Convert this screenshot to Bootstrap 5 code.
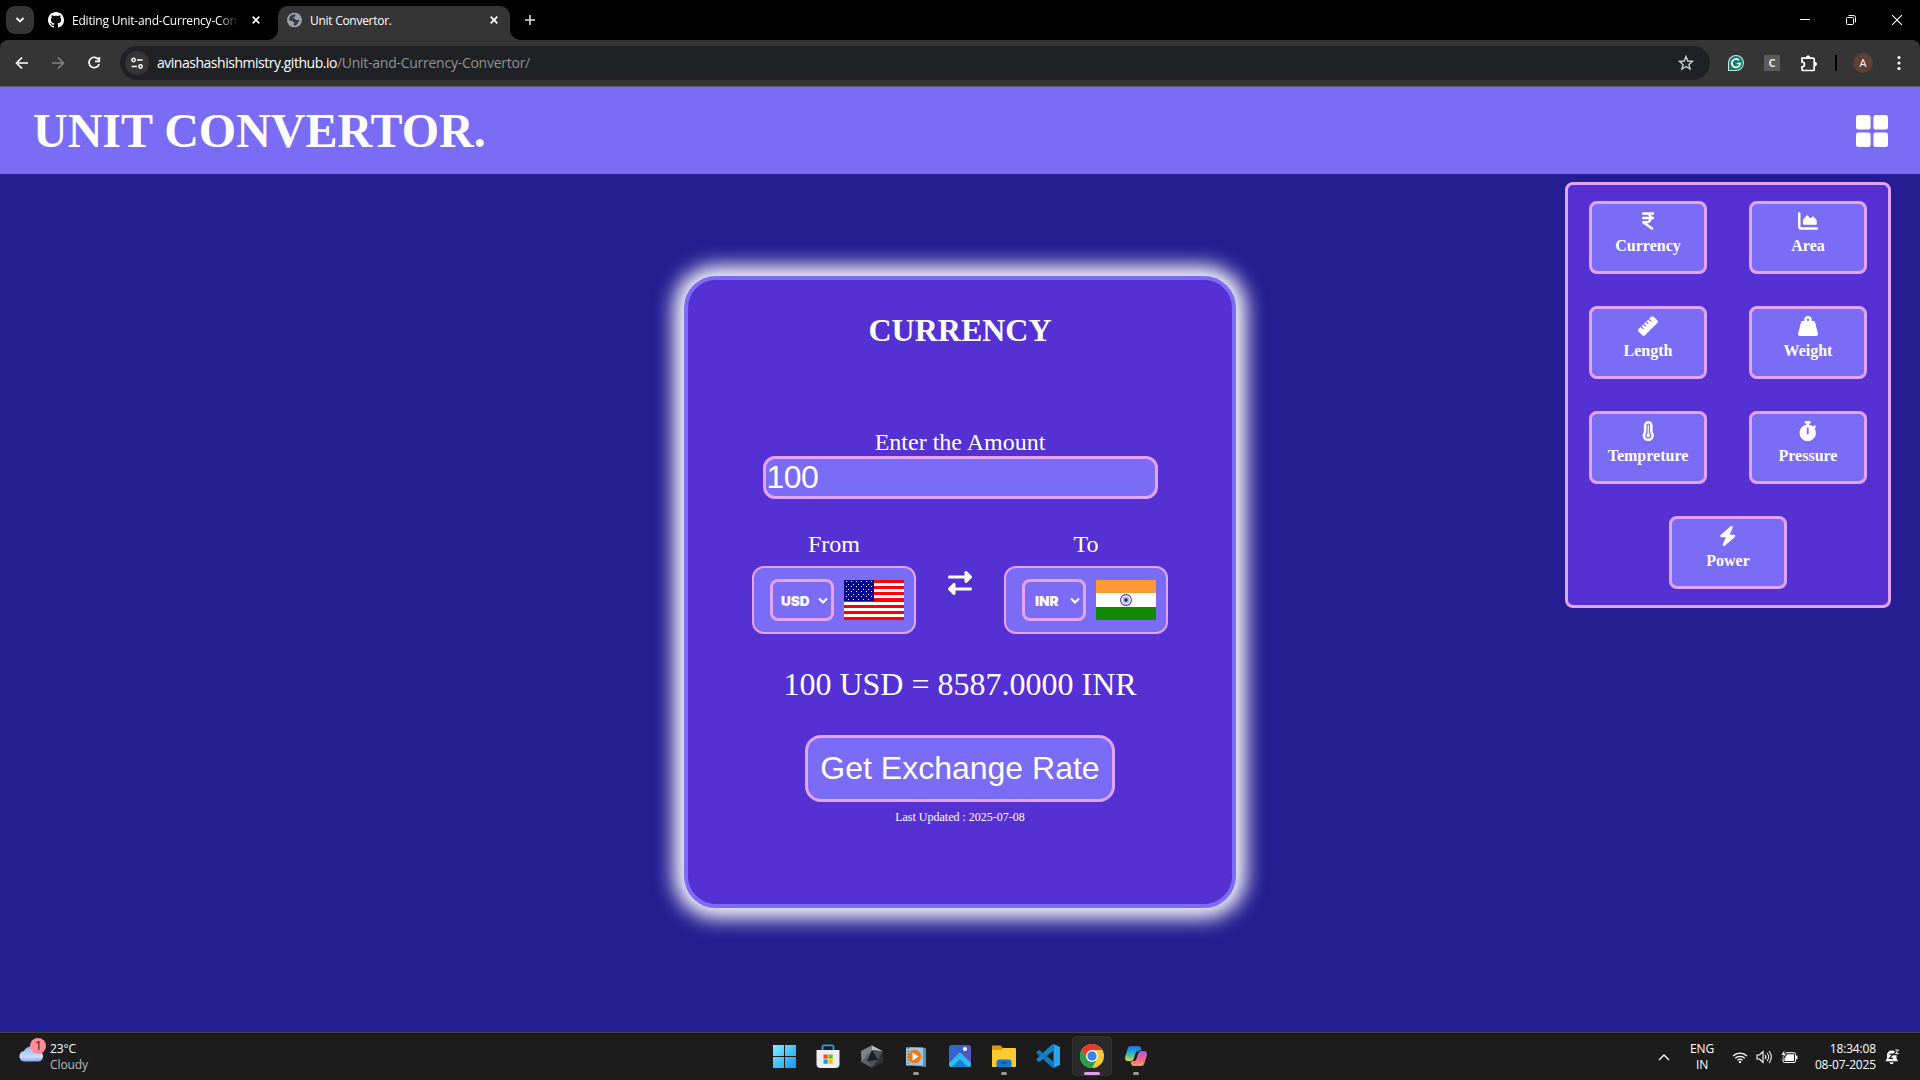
<!DOCTYPE html>
<html lang="en">
<head>
<meta charset="utf-8">
<title>Unit Convertor.</title>
<link href="https://cdn.jsdelivr.net/npm/bootstrap@5.3.0/dist/css/bootstrap.min.css" rel="stylesheet">
<style>
:root{--lilac:#7b6cf6;--violet:#5531d3;--navy:#241e92;--pink:#e5a4fb;}
html,body{height:1080px;overflow:hidden;}
body{width:1920px;background:var(--navy);font-family:"Liberation Serif",serif;color:#fff;}
svg{display:block;flex:none;}
.ui{font-family:"Open Sans","Noto Sans",sans-serif;}
/* browser frame */
.strip{height:40px;background:#000;font-size:12px;line-height:40px;white-space:nowrap;}
.tabsearch{width:28px;height:28px;border-radius:9px;background:#353535;margin:6px 0 0 6px;}
.tab-idle{width:244px;padding:0 0 8px 14px;}
.tab-idle .tabname{width:168px;overflow:hidden;letter-spacing:-.2px;padding-top:1px;-webkit-mask-image:linear-gradient(90deg,#000 146px,transparent 166px);mask-image:linear-gradient(90deg,#000 146px,transparent 166px);}
.tab-idle .x-mark{margin-left:12px;}
.tab-live{width:232px;height:34px;margin-top:6px;background:#353535;border-radius:10px 10px 0 0;padding:0 11px 0 9px;line-height:30px;}
.tab-live .tabname{letter-spacing:-.28px;}
.tab-live .fav{margin-top:6px;}
.tab-live .x-mark{margin-top:10px;}
.tab-live::before,.tab-live::after{content:"";position:absolute;bottom:0;width:10px;height:10px;}
.tab-live::before{left:-10px;background:radial-gradient(circle at 0 0,transparent 9.5px,#353535 10px);}
.tab-live::after{right:-10px;background:radial-gradient(circle at 100% 0,transparent 9.5px,#353535 10px);}
.newtab{margin:15px 0 0 15px;}
.wincontrols{gap:36px;padding-right:18px;height:39px;}
.toolrow-wrap{background:#000;}
.toolrow{height:47px;background:#353535;border-radius:8px 8px 0 0;border-bottom:1px solid #5f5f5f;padding:6px 0 6px 14px;}
.gap-l20{margin-left:20px;}
.omni{width:1590px;height:34px;border-radius:17px;background:#202124;margin-left:18px;margin-right:18px;padding:0 16px 0 5px;font-size:14px;}
.sitebtn{width:24px;height:24px;border-radius:50%;background:#353535;}
.addr{margin-left:8px;line-height:32px;letter-spacing:-.48px;}
.addr .rest{color:#8e9195;letter-spacing:-.26px;}
.ext-c{width:16px;height:16px;background:#5b5b5b;font:bold 11px/16px "Open Sans",sans-serif;color:#e8e8e8;}
.vbar{width:2px;height:16px;margin-left:17px;}
.avatar{width:20px;height:20px;border-radius:50%;background:#5d4037;font-size:11px;line-height:20px;margin:0 24px 0 16px;}
/* page */
.topbar{height:87px;background:var(--lilac);padding:0 32px 0 33px;}
.topbar h1{font-size:48px;line-height:56px;font-weight:700;margin:1px 0 0;}
.stage{height:858px;padding-top:102px;}
.conv{width:552px;height:632px;background:var(--violet);border:4px solid var(--lilac);border-radius:32px;box-shadow:0 0 20px 10px #fff;padding-top:32px;}
.conv h2{font-size:32px;line-height:36px;font-weight:700;margin:0 0 80px;}
.cap24{font-size:24px;line-height:28px;}
.amount{width:395px;height:43px;border:3px solid var(--pink);border-radius:12px;background:var(--lilac);color:#fff;font:32px/36px "Liberation Sans",sans-serif;padding:0 1px 1px;outline:0;letter-spacing:-.5px;}
.pair{margin-top:31px;width:416px;}
.swap{margin-top:41px;}
.pick{width:164px;height:68px;border:2px solid var(--pink);border-radius:12px;background:var(--lilac);margin-top:8px;padding:0 10px 0 16px;}
.sel{width:64px;height:42px;border:3px solid var(--pink);border-radius:8px;font:900 13.6px/36px Inter,sans-serif;padding:2px 3px 0 8px;}
.sel .inr{padding-left:2px;}
.outcome{font-size:32px;line-height:36px;margin-top:32px;}
.go{width:310px;height:67px;margin-top:33px;border:3px solid var(--pink);border-radius:16px;background:var(--lilac);color:#fff;font:32px/58px "Liberation Sans",sans-serif;padding:0 0 2px;}
.stamp{font-size:12px;line-height:14px;margin-top:8px;}
.menu{width:326px;height:426px;right:29px;top:8px;border:3px solid var(--pink);border-radius:8px;background:var(--violet);padding-top:16px;gap:32px 42px;}
.tile{width:118px;height:73px;border:3px solid var(--pink);border-radius:8px;background:var(--lilac);font-weight:700;font-size:16px;line-height:18px;padding-top:7px;}
.tile svg{height:20px;margin-bottom:6px;}
/* taskbar */
.taskbar{height:48px;background:#1c1c1c;border-top:1px solid #444;font-size:12px;line-height:16px;}
.weather{width:764px;padding:5px 0 0 18px;letter-spacing:-.1px;}
.wtext{margin:3px 0 0 4px;}
.sky{color:#bbb;}
.app{width:40px;height:40px;margin:3px 4px 0 0;padding-top:8px;border-radius:5px;}
.app.on{background:#292929;box-shadow:inset 0 0 0 1px #333;}
.dot{width:6px;height:3px;border-radius:2px;background:#9a9a9a;margin-top:4px;}
.on .dot{width:16px;background:#dba0e5;}
.tray{padding-right:20px;height:48px;}
.lang{width:24px;margin:0 18px 0 20px;letter-spacing:-.1px;}
.quick{gap:8px;}
.clock{width:72px;margin:0 9px 0 6px;letter-spacing:-.15px;white-space:nowrap;}
</style>
<script src="https://cdn.jsdelivr.net/npm/bootstrap@5.3.0/dist/js/bootstrap.bundle.min.js"></script>
</head>
<body class="d-flex flex-column">

<div class="strip ui d-flex">
  <div class="tabsearch d-flex align-items-center justify-content-center"><svg width="10" height="8" fill="none" stroke="#fff" stroke-width="1.8"><path d="M1.5 2 5 5.5 8.500 2"/></svg></div>
  <div class="tab-idle d-flex align-items-center">
    <svg class="mt-2" width="16" height="16" viewBox="0 0 16 16" fill="#fff"><path d="M8 0C3.580 0 0 3.580 0 8c0 3.540 2.290 6.530 5.470 7.590.4.070.55-.17.55-.38 0-.19-.010-.82-.010-1.490-2.010.37-2.530-.49-2.690-.94-.09-.23-.48-.94-.82-1.130-.28-.15-.68-.52-.010-.53.63-.010 1.080.58 1.230.82.72 1.210 1.870.87 2.330.66.070-.52.28-.87.51-1.070-1.780-.2-3.640-.89-3.640-3.950 0-.87.31-1.590.82-2.150-.08-.2-.36-1.020.08-2.120 0 0 .67-.21 2.200.82.64-.18 1.320-.27 2-.27s1.360.09 2 .27c1.530-1.040 2.200-.82 2.200-.82.44 1.100.16 1.920.08 2.120.51.56.82 1.270.82 2.150 0 3.070-1.870 3.750-3.650 3.950.29.25.54.73.54 1.480 0 1.070-.010 1.930-.010 2.200 0 .21.15.46.55.38A8.010 8.010 0 0 0 16 8c0-4.420-3.580-8-8-8z"/></svg>
    <div class="tabname ms-2 mt-2">Editing Unit-and-Currency-Conv</div>
    <svg class="x-mark mt-2" width="8" height="8" stroke="#fff" stroke-width="1.700"><path d="M.7.7 7.300 7.300M7.300.7.7 7.300"/></svg>
  </div>
  <div class="tab-live position-relative d-flex align-items-start">
    <svg class="fav" width="15" height="16" viewBox="0 0 16 16"><circle cx="8" cy="8" r="7.800" fill="#9aa0a8"/><path d="M7 1.500 10 2c-.5 1-2 1-2 2.500L5.500 6H8l1.500 2H13l-1 3-3 3.500L7 13l1-2-1.500-1.500L2 8l1-4z" fill="#353a44"/><circle cx="8" cy="8" r="7" fill="none" stroke="#9aa0a8" stroke-width="1.500"/></svg>
    <div class="tabname ms-2">Unit Convertor.</div>
    <svg class="x-mark ms-auto" width="10" height="8" stroke="#fff" stroke-width="1.700"><path d="M1.700.7 8.300 7.300M8.300.7 1.700 7.300"/></svg>
  </div>
  <svg class="newtab" width="10" height="10" stroke="#ddd" stroke-width="1.600"><path d="M5 0V10M0 5H10"/></svg>
  <div class="wincontrols ms-auto d-flex align-items-center">
    <svg width="10" height="10"><path d="M0 4.500H10" stroke="#fff"/></svg>
    <svg width="10" height="10" fill="none" stroke="#fff"><rect x=".5" y="2.500" width="7" height="7" rx="1"/><path d="M2.500.5H7.500a2 2 0 0 1 2 2V7.500"/></svg>
    <svg width="10" height="10" stroke="#fff" stroke-width="1.100"><path d="M0 0 10 10M10 0 0 10"/></svg>
  </div>
</div>
<div class="toolrow-wrap ui">
  <div class="toolrow d-flex align-items-center">
    <svg width="16" height="16" fill="none" stroke="#fff" stroke-width="1.700"><path d="M14 8H3M8 2.500 2.500 8 8 13.500"/></svg>
    <svg class="gap-l20" width="16" height="16" fill="none" stroke="#828282" stroke-width="1.700"><path d="M2 8H13M8 2.500 13.500 8 8 13.500"/></svg>
    <svg class="gap-l20" width="16" height="16" fill="none" stroke="#fff" stroke-width="1.700"><path d="M12.500 4.500A5.200 5.200 0 1 0 13.200 9M13.300 2V6.300H9"/></svg>
    <div class="omni d-flex align-items-center">
      <div class="sitebtn d-flex align-items-center justify-content-center"><svg width="14" height="12" fill="none" stroke="#fff" stroke-width="1.400"><circle cx="3.500" cy="3" r="1.700"/><path d="M7 3H12.500M1.500 9.500H7"/><circle cx="10.500" cy="9.500" r="1.700"/></svg></div>
      <div class="addr">avinashashishmistry.github.io<span class="rest">/Unit-and-Currency-Convertor/</span></div>
      <svg class="ms-auto" width="16" height="16" fill="none" stroke="#d0d0d0" stroke-width="1.400"><path d="M8 1.600 9.800 6 14.600 6.300 10.900 9.400 12.100 14 8 11.500 3.900 14 5.100 9.400 1.400 6.300 6.200 6z"/></svg>
    </div>
    <svg width="16" height="16"><path d="M0 16V8A8 8 0 1 1 8 16z" fill="#cfe9e2"/><path d="M1 15V8A7 7 0 1 1 8 15z" fill="#0b7f6b"/><path d="M11 5.200A4.200 4.200 0 1 0 12.200 8.500H8.800" fill="none" stroke="#fff" stroke-width="1.700"/></svg>
    <div class="ext-c text-center gap-l20">C</div>
    <svg class="gap-l20" width="18" height="17" fill="none" stroke="#fff" stroke-width="1.700"><path d="M2 3.200H13.200a1 1 0 0 1 1 1V14.500a1 1 0 0 1-1 1H3a1 1 0 0 1-1-1V11.800a2.200 2.200 0 0 0 0-4.800z"/><path d="M6.400 2.400a1.700 1.700 0 0 1 3.400 0zM15 7.300a1.700 1.700 0 0 1 0 3.400z" fill="#fff" stroke-width=".8"/></svg>
    <div class="vbar bg-black"></div>
    <div class="avatar text-center">A</div>
    <svg width="4" height="16" fill="#fff"><circle cx="2" cy="2.500" r="1.600"/><circle cx="2" cy="8" r="1.600"/><circle cx="2" cy="13.500" r="1.600"/></svg>
  </div>
</div>

<header class="topbar d-flex align-items-center justify-content-between">
  <h1>UNIT CONVERTOR.</h1>
  <svg width="32" height="32" fill="#fff"><rect width="14.600" height="14.600" rx="2.500"/><rect x="17.400" width="14.600" height="14.600" rx="2.500"/><rect y="17.400" width="14.600" height="14.600" rx="2.500"/><rect x="17.400" y="17.400" width="14.600" height="14.600" rx="2.500"/></svg>
</header>

<main class="stage position-relative">
  <section class="conv mx-auto d-flex flex-column align-items-center">
    <h2>CURRENCY</h2>
    <label class="cap24" for="amt">Enter the Amount</label>
    <input id="amt" class="amount" type="text" value="100">
    <div class="pair d-flex justify-content-between">
      <div class="text-center cap24">From
        <div class="pick d-flex align-items-center justify-content-between">
          <div class="sel d-flex align-items-center justify-content-between"><span>USD</span><svg width="10" height="8" fill="none" stroke="#fff" stroke-width="2"><path d="M1 1.500 5 5.500 9 1.500"/></svg></div>
          <svg width="60" height="40" shape-rendering="crispEdges"><defs><pattern id="st" width="5" height="5" patternUnits="userSpaceOnUse"><path d="M2 1h1v1H2zM4 3.500h1v1H4z" fill="#fff"/></pattern></defs><rect width="60" height="40" fill="#f00"/><path d="M0 4.600H60M0 10.700H60M0 16.900H60M0 23.100H60M0 29.200H60M0 35.400H60" stroke="#fff" stroke-width="3.080"/><rect width="30" height="21" fill="#00008f"/><rect x="1" y="1" width="28" height="19" fill="url(#st)"/></svg>
        </div>
      </div>
      <svg class="swap" width="24" height="24" viewBox="0 0 512 512" fill="#fff"><path d="M32 96l320 0V32c0-12.900 7.800-24.600 19.800-29.600s25.700-2.200 34.900 6.900l96 96c6 6 9.400 14.100 9.400 22.600s-3.400 16.600-9.400 22.600l-96 96c-9.200 9.200-22.900 11.900-34.900 6.900s-19.800-16.600-19.800-29.600V160L32 160c-17.700 0-32-14.300-32-32s14.300-32 32-32zM480 352c17.700 0 32 14.300 32 32s-14.300 32-32 32H160v64c0 12.900-7.800 24.600-19.800 29.600s-25.700 2.200-34.900-6.900l-96-96c-6-6-9.400-14.100-9.400-22.600s3.400-16.600 9.400-22.600l96-96c9.200-9.200 22.900-11.900 34.900-6.900s19.800 16.600 19.800 29.600l0 64H480z"/></svg>
      <div class="text-center cap24">To
        <div class="pick d-flex align-items-center justify-content-between">
          <div class="sel d-flex align-items-center justify-content-between"><span class="inr">INR</span><svg width="10" height="8" fill="none" stroke="#fff" stroke-width="2"><path d="M1 1.500 5 5.500 9 1.500"/></svg></div>
          <svg width="60" height="40"><rect width="60" height="40" fill="#fff"/><rect width="60" height="13" fill="#ff9933"/><rect y="27" width="60" height="13" fill="#128807"/><circle cx="30" cy="20" r="5.400" fill="#fff" stroke="#3a3a9c" stroke-width="1.100"/><circle cx="30" cy="20" r="3.400" fill="#b9b9e0"/><circle cx="30" cy="20" r="1.700" fill="#1c1c8a"/></svg>
        </div>
      </div>
    </div>
    <div class="outcome">100 USD = 8587.0000 INR</div>
    <button class="go">Get Exchange Rate</button>
    <div class="stamp">Last Updated : 2025-07-08</div>
  </section>

  <nav class="menu position-absolute d-flex flex-wrap justify-content-center align-content-start">
    <div class="tile d-flex flex-column align-items-center"><svg viewBox="0 0 320 512" fill="#fff"><path d="M0 64C0 46.300 14.300 32 32 32l64 0 16 0 176 0c17.700 0 32 14.300 32 32s-14.300 32-32 32l-56.200 0c9.600 14.400 16.700 30.600 20.700 48l35.600 0c17.700 0 32 14.300 32 32s-14.300 32-32 32l-35.600 0c-13.200 58.300-61.900 103.200-122.200 110.900L274.600 422c14.400 10.300 17.700 30.300 7.400 44.600s-30.300 17.700-44.600 7.400L13.400 314C2.100 306-2.700 291.500 1.500 278.200S18.100 256 32 256l80 0c32.800 0 61-19.700 73.300-48L32 208c-17.700 0-32-14.300-32-32s14.300-32 32-32l153.300 0C173 115.700 144.800 96 112 96L96 96 32 96C14.300 96 0 81.700 0 64z"/></svg>Currency</div>
    <div class="tile d-flex flex-column align-items-center"><svg viewBox="0 0 512 512" fill="#fff"><path d="M64 64c0-17.700-14.300-32-32-32S0 46.300 0 64V400c0 44.200 35.800 80 80 80H480c17.700 0 32-14.300 32-32s-14.300-32-32-32H80c-8.800 0-16-7.200-16-16V64zm96 288H448c17.700 0 32-14.300 32-32V251.800c0-7.600-2.700-15-7.700-20.800l-65.800-76.800c-12.100-14.200-33.700-15-46.900-1.800l-21 21c-10 10-26.400 9.200-35.400-1.600l-39.200-47c-12.600-15.100-35.700-15.400-48.700-.6L135.900 215c-5.100 5.800-7.900 13.300-7.900 21.100v84c0 17.700 14.300 32 32 32z"/></svg>Area</div>
    <div class="tile d-flex flex-column align-items-center"><svg viewBox="0 0 512 512" fill="#fff"><path d="M177.900 494.100c-18.700 18.700-49.100 18.700-67.900 0L17.900 401.900c-18.700-18.700-18.700-49.100 0-67.900l50.700-50.700 48 48c6.200 6.200 16.400 6.200 22.600 0s6.200-16.400 0-22.600l-48-48 41.400-41.400 48 48c6.200 6.200 16.400 6.200 22.600 0s6.200-16.400 0-22.600l-48-48 41.400-41.400 48 48c6.200 6.200 16.400 6.200 22.600 0s6.200-16.400 0-22.600l-48-48 41.400-41.400 48 48c6.200 6.200 16.400 6.200 22.600 0s6.200-16.400 0-22.600l-48-48 50.700-50.700c18.700-18.700 49.100-18.700 67.900 0l92.100 92.100c18.700 18.700 18.700 49.100 0 67.900L177.900 494.100z"/></svg>Length</div>
    <div class="tile d-flex flex-column align-items-center"><svg viewBox="0 0 512 512" fill="#fff"><path d="M224 96a32 32 0 1 1 64 0 32 32 0 1 1 -64 0zm122.500 32c3.500-10 5.500-20.800 5.500-32c0-53-43-96-96-96s-96 43-96 96c0 11.200 1.900 22 5.500 32H120c-22 0-41.200 15-46.600 36.400l-72 288c-3.600 14.300-.4 29.500 8.700 41.200S33.200 512 48 512H464c14.800 0 28.700-6.800 37.800-18.500s12.300-26.800 8.700-41.200l-72-288C433.200 143 414 128 392 128H346.500z"/></svg>Weight</div>
    <div class="tile d-flex flex-column align-items-center"><svg viewBox="0 0 320 512" fill="#fff"><path d="M160 64c-26.500 0-48 21.500-48 48V276.500c0 17.300-7.100 31.900-15.300 42.500C86.200 332.600 80 349.500 80 368c0 44.200 35.800 80 80 80s80-35.800 80-80c0-18.500-6.200-35.400-16.700-48.900c-8.200-10.600-15.300-25.200-15.300-42.500V112c0-26.500-21.500-48-48-48zM48 112C48 50.200 98.100 0 160 0s112 50.100 112 112V276.500c0 .1 .1 .3 .2 .6c.2 .6 .8 1.600 1.700 2.800c18.900 24.400 30.100 55 30.100 88.100c0 79.500-64.500 144-144 144S16 447.500 16 368c0-33.200 11.200-63.800 30.100-88.100c.9-1.200 1.500-2.200 1.700-2.800c.1-.3 .2-.5 .2-.6V112zM208 368c0 26.500-21.500 48-48 48s-48-21.500-48-48c0-20.900 13.400-38.700 32-45.300V112c0-8.800 7.200-16 16-16s16 7.200 16 16V322.700c18.600 6.600 32 24.400 32 45.300z"/></svg>Tempreture</div>
    <div class="tile d-flex flex-column align-items-center"><svg viewBox="0 0 448 512" fill="#fff"><path d="M176 0c-17.700 0-32 14.300-32 32s14.300 32 32 32h16V98.400C92.300 113.800 16 200 16 304c0 114.900 93.100 208 208 208s208-93.100 208-208c0-41.800-12.300-80.700-33.500-113.200l24.100-24.100c12.500-12.500 12.500-32.800 0-45.300s-32.800-12.500-45.300 0L355.700 143c-28.100-23-62.200-38.800-99.700-44.600V64h16c17.700 0 32-14.300 32-32s-14.300-32-32-32H224 176zm72 192V320c0 13.300-10.700 24-24 24s-24-10.700-24-24V192c0-13.300 10.700-24 24-24s24 10.700 24 24z"/></svg>Pressure</div>
    <div class="tile d-flex flex-column align-items-center"><svg viewBox="0 0 448 512" fill="#fff"><path d="M349.400 44.600c5.900-13.700 1.500-29.700-10.600-38.500s-28.600-8-39.900 1.800l-256 224c-10 8.800-13.600 22.900-8.900 35.300S50.700 288 64 288H175.500L98.600 467.400c-5.900 13.700-1.500 29.700 10.600 38.500s28.600 8 39.900-1.800l256-224c10-8.800 13.600-22.900 8.900-35.300s-16.600-20.700-30-20.700H272.500L349.400 44.600z"/></svg>Power</div>
  </nav>
</main>

<footer class="taskbar ui d-flex">
  <div class="weather d-flex align-items-start">
    <svg width="28" height="26"><defs><linearGradient id="cl" x1="0" y1="0" x2="0" y2="1"><stop offset="0" stop-color="#8fb4f4"/><stop offset=".7" stop-color="#c9defb"/><stop offset="1" stop-color="#7fa5ec"/></linearGradient></defs><path d="M6 23.500A5.300 5.300 0 0 1 6 13 8 8 0 0 1 20.500 13a5.300 5.300 0 0 1 0 10.500z" fill="url(#cl)"/><circle cx="20" cy="8" r="8" fill="#ff8e9c"/><text x="17" y="12" font-size="12" fill="#111" font-family="Open Sans">1</text></svg>
    <div class="wtext"><div>23°C</div><div class="sky">Cloudy</div></div>
  </div>
  <div class="d-flex">
    <div class="app d-flex flex-column align-items-center"><svg width="24" height="24"><defs><linearGradient id="wn" x1="0" y1="0" x2="1" y2="1"><stop offset="0" stop-color="#7df0ff"/><stop offset="1" stop-color="#0c9af7"/></linearGradient></defs><path d="M1 1H12V12H1zM13 1H24V12H13zM1 13H12V24H1zM13 13H24V24H13z" fill="url(#wn)"/></svg></div>
    <div class="app d-flex flex-column align-items-center"><svg width="24" height="24"><path d="M6.500 7V2.800a1.500 1.500 0 0 1 1.500-1.500h8a1.500 1.500 0 0 1 1.500 1.500V7" fill="none" stroke="#1fa5e4" stroke-width="1.800"/><path d="M.5 6H23.500V20a4 4 0 0 1-4 4H4.500a4 4 0 0 1-4-4z" fill="#eee"/><path d="M7.500 10.500h4.200v4.200H7.500z" fill="#f25022"/><path d="M12.500 10.500h4.200v4.200h-4.200z" fill="#7fba00"/><path d="M7.500 15.500h4.200v4.200H7.500z" fill="#00a4ef"/><path d="M12.500 15.500h4.200v4.200h-4.200z" fill="#ffb900"/></svg></div>
    <div class="app d-flex flex-column align-items-center"><svg width="24" height="24"><path d="M12 1.500 22.500 7V18L12 23.500 1.500 18V7z" fill="#4c4f55"/><path d="M12 1.500 22.500 7 13 6 1.500 13V7z" fill="#b9bfc7"/><path d="M12 1.500 1.500 7V18L12 6z" fill="#7c828b"/><path d="M12 6 18 16 7 17z" fill="#1c1d20"/><path d="M22.500 7V18L12 23.500 18 16z" fill="#303236"/><path d="M12 6 7 17 12 23.500 1.500 18z" fill="#5f646c"/></svg></div>
    <div class="app d-flex flex-column align-items-center"><svg width="24" height="24"><path d="M6 3 22 4V23L6 21z" fill="#5993b4"/><path d="M2 3.500H19V21.500H2z" fill="#9cc9df"/><path d="M4 3.500V21.500" stroke="#5b8ba5" stroke-width="1.500" stroke-dasharray="1.500"/><circle cx="10.500" cy="12.500" r="6.800" fill="#f07818"/><path d="M8.500 8.500V16.500L14.500 12.500z" fill="#fff"/></svg><div class="dot"></div></div>
    <div class="app d-flex flex-column align-items-center"><svg width="24" height="24"><defs><linearGradient id="ph" x1="0" y1="0" x2="1" y2="1"><stop offset="0" stop-color="#1d6fd6"/><stop offset="1" stop-color="#6c4bb8"/></linearGradient></defs><rect x="1" y="1" width="22" height="22" rx="2.500" fill="url(#ph)"/><path d="M1 19 10.500 9.500a2 2 0 0 1 2.800 0L23 19v1.500a2.500 2.500 0 0 1-2.500 2.500h-17A2.500 2.500 0 0 1 1 20.500z" fill="#2fb9ee"/><path d="M12 15 20 23H4z" fill="#1285d2"/><circle cx="17" cy="5" r="2.100" fill="#fff"/></svg></div>
    <div class="app d-flex flex-column align-items-center"><svg width="24" height="24"><path d="M0 2.500A1 1 0 0 1 1 1.500H8.500L11 4V8H0z" fill="#d99b0c"/><path d="M0 6H9L11 4H23a1 1 0 0 1 1 1V22a1 1 0 0 1-1 1H1a1 1 0 0 1-1-1z" fill="#fcc934"/><path d="M4.500 23V18.500a3 3 0 0 1 3-3h9a3 3 0 0 1 3 3V23z" fill="#1379cf"/><path d="M9 18.800h6" stroke="#0a4f94" stroke-width="1.500"/></svg><div class="dot"></div></div>
    <div class="app d-flex flex-column align-items-center"><svg width="24" height="24"><path d="M17.500 0 24 3V21L17.500 24z" fill="#2ba3ee"/><path d="M17.500 0V6.500L3.200 18 .5 16.200V15L16 .5z" fill="#1783c9"/><path d="M17.500 24V17.500L3.200 6 .5 7.800V9L16 23.500z" fill="#0f79c0"/></svg></div>
    <div class="app on d-flex flex-column align-items-center"><svg width="24" height="24"><circle cx="12" cy="12" r="12" fill="#fcc934"/><path d="M12 6H22.400A12 12 0 0 0 1.600 6L6.800 15z" fill="#e33b2e"/><path d="M1.600 6 6.800 15 12 18 17.200 15 12 24A12 12 0 0 1 1.600 6z" fill="#22a050"/><circle cx="12" cy="12" r="6" fill="#fff"/><circle cx="12" cy="12" r="4.700" fill="#3b82f0"/></svg><div class="dot"></div></div>
    <div class="app d-flex flex-column align-items-center"><svg width="24" height="24"><defs><linearGradient id="ca" x1="0" y1="0" x2="0" y2="1"><stop offset="0" stop-color="#1d6fe0"/><stop offset=".5" stop-color="#29b6c9"/><stop offset="1" stop-color="#e8d52c"/></linearGradient><linearGradient id="cb" x1="0" y1="0" x2="0" y2="1"><stop offset="0" stop-color="#a45ae8"/><stop offset=".5" stop-color="#f0609a"/><stop offset="1" stop-color="#fb9a4b"/></linearGradient></defs><path d="M7 2H14.500C17 2 17 4 17.500 6L14 7C12 7 11.500 9 10.500 12.500 9.500 16 9 17 6 17H4C1 17 .5 14.500 1.500 11.500L3.500 5C4.300 2.800 5 2 7 2z" fill="url(#ca)"/><path d="M17 22H9.500C7.500 22 7 20 6.500 17.500L10 17C12 17 12.500 15 13.500 11.500 14.500 8 15 7 18 7H20C23 7 23.500 9.500 22.500 12.500L20.500 19C19.700 21.200 19 22 17 22z" fill="url(#cb)"/></svg><div class="dot"></div></div>
  </div>
  <div class="tray ms-auto d-flex align-items-center">
    <svg width="12" height="8" fill="none" stroke="#fff" stroke-width="1.400"><path d="M1 7 6 2 11 7"/></svg>
    <div class="lang text-center">ENG<br>IN</div>
    <div class="quick d-flex align-items-center">
    <svg width="16" height="14" fill="none" stroke="#fff" stroke-width="1.300"><path d="M1 6A10 10 0 0 1 15 6M3.200 8.300A6.900 6.900 0 0 1 12.800 8.300M5.400 10.400A3.800 3.800 0 0 1 10.600 10.400"/><circle cx="8" cy="12" r="1.200" fill="#fff" stroke="none"/></svg>
    <svg width="17" height="14" fill="none" stroke="#fff" stroke-width="1.100"><path d="M1 5H3.500L7 1.500V12.500L3.500 9H1zM9 5A3 3 0 0 1 9 9M11 3A6 6 0 0 1 11 11M13 1A9 9 0 0 1 13 13"/></svg>
    <svg width="17" height="14"><path d="M5 2.700H13a1.500 1.500 0 0 1 1.500 1.500V11A1.500 1.500 0 0 1 13 12.500H3.500A1.500 1.500 0 0 1 2 11V7z" fill="none" stroke="#fff"/><path d="M6 4.200H13V11H3.500V8.500z" fill="#fff"/><path d="M15 5.800h1.500v3.500H15z" fill="#fff"/><path d="M3.500 0 0 5H2.500L1.500 8.500 5.500 3.500H3.500z" fill="#fff" stroke="#1c1c1c" stroke-width=".5"/></svg>
    </div>
    <div class="clock text-end">18:34:08<br>08-07-2025</div>
    <svg width="15" height="16"><path d="M6.500 1.500A4.500 4.500 0 0 0 2 6V9.500L.3 12.300H13L11.500 9.500V6A4.500 4.500 0 0 0 6.500 1.500z" fill="#fff"/><path d="M4.700 13.300h3.800a1.900 1.900 0 0 1-3.800 0z" fill="#fff"/><path d="M4.500 5.200H8L4.500 9.300H8" fill="none" stroke="#1c1c1c" stroke-width="1.200"/><path d="M10 1.200H13.500L10.300 4.800H13.800" fill="none" stroke="#1c1c1c" stroke-width="3"/><path d="M10.300 1H13.500L10.500 4.600H13.800" fill="none" stroke="#fff" stroke-width="1"/></svg>
  </div>
</footer>
</body>
</html>
